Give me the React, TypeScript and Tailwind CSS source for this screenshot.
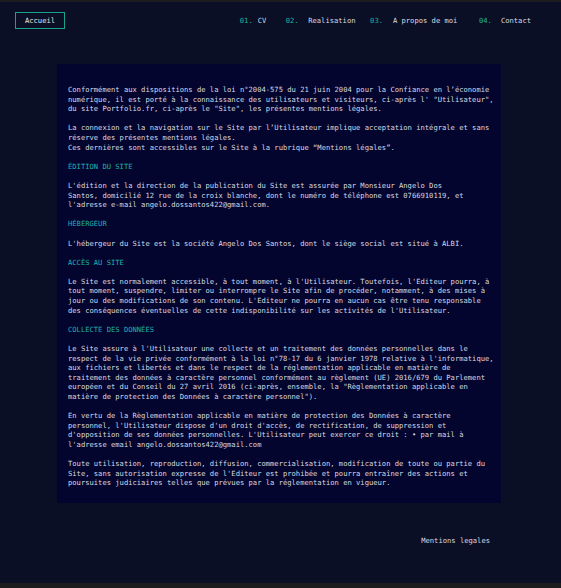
import React from "react";

const P = ({ lines }: { lines: string[] }) => (
  <div className="mb-[9.6px]">
    {lines.map((l, i) => (
      <div key={i} className="whitespace-pre">
        {l}
      </div>
    ))}
  </div>
);

const H = ({ children }: { children: React.ReactNode }) => (
  <div className="mb-[9.6px] text-[#1fb3ad] whitespace-pre">{children}</div>
);

export default function App() {
  return (
    <div
      className="w-[561px] h-[588px] box-border border-t-2 border-b-[5px] border-[#1c1c1e] bg-[#0a0f25] flex flex-col text-[7.15px] leading-[9.6px] text-[#d8dae2]"
      style={{ fontFamily: '"DejaVu Sans Mono", "Liberation Mono", monospace' }}
    >
      <header className="flex items-center pt-[10px] pl-[15px] pr-[30px]">
        <div className="w-[50px] h-[17px] border border-[#1a9f91] flex items-center justify-center text-[#e2e4ea]">
          Accueil
        </div>
        <nav className="ml-auto flex items-center pt-[1px]">
          <span className="text-[#1fb59f]">01.</span>
          <span className="ml-[5px]">CV</span>
          <span className="ml-[19.4px] text-[#1fb59f]">02.</span>
          <span className="ml-[9.6px]">Realisation</span>
          <span className="ml-[14.6px] text-[#1fb59f]">03.</span>
          <span className="ml-[9.9px]">A propos de moi</span>
          <span className="ml-[21.6px] text-[#1fb59f]">04.</span>
          <span className="ml-[9px]">Contact</span>
        </nav>
      </header>

      <main className="ml-[57px] mt-[35px] w-[444px] h-[439px] box-border bg-[#03052e] pl-[11px] pt-[21px]">
        <P
          lines={[
            "Conformément aux dispositions de la loi n°2004-575 du 21 juin 2004 pour la Confiance en l’économie",
            "numérique, il est porté à la connaissance des utilisateurs et visiteurs, ci-après l' \"Utilisateur\",",
            "du site Portfolio.fr, ci-après le \"Site\", les présentes mentions légales.",
          ]}
        />
        <P
          lines={[
            "La connexion et la navigation sur le Site par l’Utilisateur implique acceptation intégrale et sans",
            "réserve des présentes mentions légales.",
            "Ces dernières sont accessibles sur le Site à la rubrique “Mentions légales”.",
          ]}
        />
        <H>ÉDITION DU SITE</H>
        <P
          lines={[
            "L'édition et la direction de la publication du Site est assurée par Monsieur Angelo Dos",
            "Santos, domicilié 12 rue de la croix blanche, dont le numéro de téléphone est 0766910119, et",
            "l'adresse e-mail angelo.dossantos422@gmail.com.",
          ]}
        />
        <H>HÉBERGEUR</H>
        <P
          lines={[
            "L'hébergeur du Site est la société Angelo Dos Santos, dont le siège social est situé à ALBI.",
          ]}
        />
        <H>ACCÈS AU SITE</H>
        <P
          lines={[
            "Le Site est normalement accessible, à tout moment, à l'Utilisateur. Toutefois, l'Editeur pourra, à",
            "tout moment, suspendre, limiter ou interrompre le Site afin de procéder, notamment, à des mises à",
            "jour ou des modifications de son contenu. L'Editeur ne pourra en aucun cas être tenu responsable",
            "des conséquences éventuelles de cette indisponibilité sur les activités de l'Utilisateur.",
          ]}
        />
        <H>COLLECTE DES DONNÉES</H>
        <P
          lines={[
            "Le Site assure à l'Utilisateur une collecte et un traitement des données personnelles dans le",
            "respect de la vie privée conformément à la loi n°78-17 du 6 janvier 1978 relative à l'informatique,",
            "aux fichiers et libertés et dans le respect de la réglementation applicable en matière de",
            "traitement des données à caractère personnel conformément au règlement (UE) 2016/679 du Parlement",
            "européen et du Conseil du 27 avril 2016 (ci-après, ensemble, la \"Règlementation applicable en",
            "matière de protection des Données à caractère personnel\").",
          ]}
        />
        <P
          lines={[
            "En vertu de la Règlementation applicable en matière de protection des Données à caractère",
            "personnel, l'Utilisateur dispose d'un droit d'accès, de rectification, de suppression et",
            "d'opposition de ses données personnelles. L'Utilisateur peut exercer ce droit : • par mail à",
            "l'adresse email angelo.dossantos422@gmail.com",
          ]}
        />
        <P
          lines={[
            "Toute utilisation, reproduction, diffusion, commercialisation, modification de toute ou partie du",
            "Site, sans autorisation expresse de l'Editeur est prohibée et pourra entraîner des actions et",
            "poursuites judiciaires telles que prévues par la réglementation en vigueur.",
          ]}
        />
      </main>

      <footer className="flex justify-end pr-[71px] mt-[33px]">
        <span>Mentions legales</span>
      </footer>
    </div>
  );
}
